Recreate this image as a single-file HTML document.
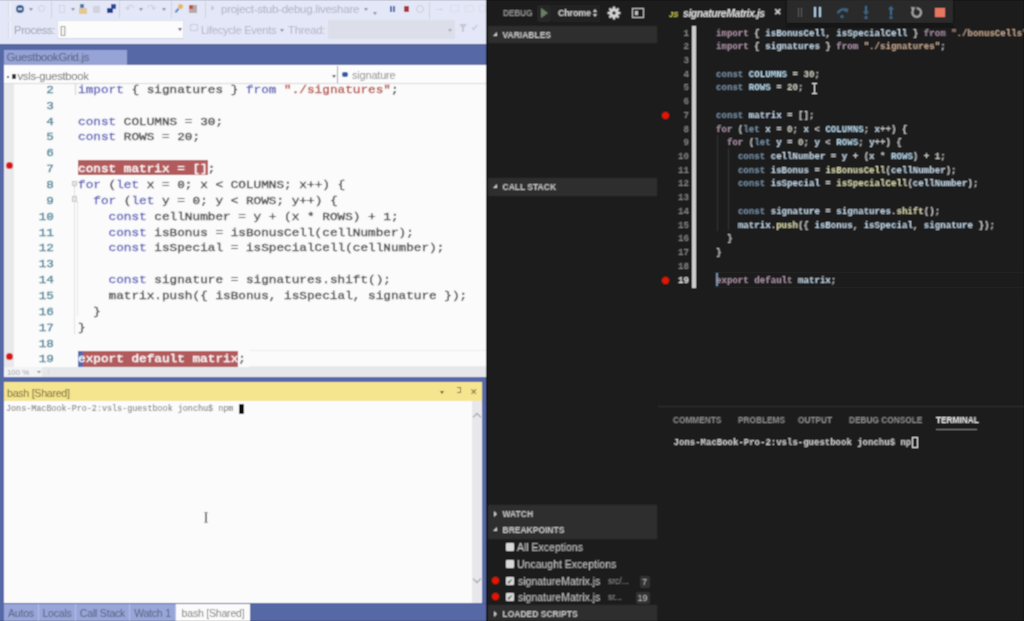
<!DOCTYPE html>
<html><head><meta charset="utf-8">
<style>
*{margin:0;padding:0;box-sizing:border-box}
html,body{width:1024px;height:621px;overflow:hidden;background:#1b1b1b;font-family:"Liberation Sans",sans-serif}
.a{position:absolute}
.tri{width:0;height:0;border-top:3px solid #8a8e9e;border-left:2.5px solid transparent;border-right:2.5px solid transparent}
.tri2{width:0;height:0;border-top:3px solid #505460;border-left:2.5px solid transparent;border-right:2.5px solid transparent}
.sep{width:1px;height:17px;background:#cfd3de}
/* LEFT VS */
#vs{left:0;top:0;width:486px;height:621px;background:#5668a6;overflow:hidden}
#tb{left:0;top:0;width:486px;height:45px;background:#e3e7f7;border-bottom:1.5px solid #4a5a92;color:#a4a8b8;font-size:11px}
#tab1{left:4px;top:49.5px;width:123px;height:15px;background:#96a3d6;color:#56607a;font-size:11.3px;line-height:15px;padding-left:2.5px;letter-spacing:-0.3px}
#nav{z-index:2;left:4px;top:64.5px;width:482px;height:19.5px;background:#fcfcfc;border-bottom:1px solid #d8dade;font-size:10.5px;color:#6a6a6a}
#code1{left:4px;top:83px;width:482px;height:284px;background:#fbfbfb;overflow:hidden}
#glyph{left:0;top:0;width:10px;height:284px;background:#e9e9eb}
.L{position:absolute;left:0;height:15.86px;line-height:15.86px;font-family:"Liberation Mono",monospace;font-size:12.72px;white-space:pre;color:#3c3c3c;-webkit-text-stroke:0.35px;transform:scaleY(0.9);transform-origin:0 50%}
.n{position:absolute;left:0;width:50px;text-align:right;color:#3f7f94}
.c{position:absolute;left:74px}
.kw{color:#5a5cba}
.st{color:#b4463a}
.hl{color:#fff}
.hl2{color:#fff}
.hlb{position:absolute;background:#b35a5c}
.bp{position:absolute;width:7px;height:7px;border-radius:50%;background:#d4161a}
#stat{left:4px;top:367px;width:482px;height:10px;background:#e6e7eb}
#yh{left:4px;top:382px;width:478px;height:19px;background:#f6e58f;color:#6a6030;font-size:10px;line-height:19.2px}
#term1{left:4px;top:401px;width:468px;height:202px;background:#fbfbfb}
#sb1{left:472px;top:401px;width:10px;height:202px;background:#e8e8ec}
#btabs{left:4px;top:603px;width:482px;height:18px;background:#5668a6;border-top:1px solid #4c5c98}
.bt{position:absolute;top:0;height:18px;background:#98a5d8;color:#56607c;font-size:10.5px;line-height:19.5px;text-align:center;border-right:1px solid #b4bde4;letter-spacing:-0.2px}
/* RIGHT */
#side{left:486px;top:0;width:172px;height:621px;background:#1f1f1f;color:#ccc;overflow:hidden}
.sh{position:absolute;left:2px;width:169px;height:17.5px;background:#2e2e2e;font-size:8.5px;font-weight:bold;color:#c4c4c4;line-height:19.2px}
.sh span{position:absolute;left:14.5px;letter-spacing:0px}
.tr{position:absolute;width:0;height:0}
.tr.dn{left:5px;top:6px;border-bottom:4.5px solid #c8c8c8;border-left:4.5px solid transparent}
.tr.rt{left:5.5px;top:6px;border-left:3.5px solid #c8c8c8;border-top:3px solid transparent;border-bottom:3px solid transparent}
.cbx{position:absolute;width:8px;height:8px;background:#d8d8d8;border-radius:1px;font-size:7px;line-height:9px;color:#333;text-align:center}
.bi{position:absolute;font-size:10.5px;color:#c4c4c4;letter-spacing:0px;white-space:pre}
.bi2{position:absolute;font-size:8.5px;color:#8a8a8a;white-space:pre}
.bdg{position:absolute;height:12px;background:#333;color:#bbb;font-size:9px;line-height:12px;text-align:center;border-radius:2px}
.bpd{position:absolute;width:7px;height:7px;border-radius:50%;background:#e51400}
#ed{left:658px;top:0;width:366px;height:621px;background:#1a1a1a;overflow:hidden}
.R{position:absolute;left:0;height:13.72px;line-height:13.72px;font-family:"Liberation Mono",monospace;font-size:9.12px;font-weight:bold;white-space:pre;color:#c6c6c6}
.rn{position:absolute;left:0;width:31px;text-align:right;color:#7e7e7e}
.rn.act{color:#e0e0e0}
.rc{position:absolute;left:58px}
.pt{position:absolute;top:415px;font-size:8.3px;font-weight:bold;color:#8a8a8a;letter-spacing:0px}
.pk{color:#a890a4}
.cb{color:#7890a6}
.vb{color:#c0d4e4}
.vc{color:#b8d8ec}
.sr{color:#c0a48e}
.nm{color:#cacbbe}
.fn{color:#d8d8b0}
</style></head><body>
<svg width="0" height="0" style="position:absolute"><filter id="bf" x="0" y="0" width="100%" height="100%"><feConvolveMatrix order="3" kernelMatrix="1 2 1 2 6 2 1 2 1" divisor="18" edgeMode="duplicate" preserveAlpha="true"/></filter></svg>
<div id="root" class="a" style="left:0;top:0;width:1024px;height:621px;filter:url(#bf)">
<div id="vs" class="a">
  <div id="tb" class="a">
    <!-- row1 -->
    <div class="a" style="left:8px;top:2px;width:3px;height:15px;background:#eef0f8;border-left:1px solid #d4d8e4"></div>
    <div class="a" style="left:16px;top:5px;width:8px;height:8px;border-radius:50%;background:#2f5b8c"></div>
    <div class="a" style="left:18px;top:8px;width:4px;height:2px;background:#c8d4e4"></div>
    <div class="a tri" style="left:29px;top:8px"></div>
    <div class="a" style="left:38px;top:5px;width:7px;height:7px;border-radius:50%;border:1.5px solid #cdd0dc"></div>
    <div class="a sep" style="left:51px;top:1px"></div>
    <div class="a" style="left:59px;top:5px;width:6px;height:8px;border:1px solid #d4d7e2"></div>
    <div class="a tri" style="left:71px;top:8px"></div>
    <div class="a" style="left:79px;top:8px;width:8px;height:6px;background:#e4c894"></div>
    <div class="a" style="left:80px;top:4px;width:4px;height:4px;background:#4a7ab8"></div>
    <div class="a" style="left:93px;top:6px;width:7px;height:7px;background:#d0d3dc"></div>
    <div class="a" style="left:107px;top:8px;width:6px;height:5px;background:#1d3c98"></div>
    <div class="a" style="left:111px;top:4px;width:5px;height:5px;background:#2a4aa0"></div>
    <div class="a sep" style="left:119px;top:1px"></div>
    <div class="a" style="left:125px;top:3px;width:10px;height:10px;color:#c8ccd8;font-size:11px;line-height:10px">&#x21B6;</div>
    <div class="a tri" style="left:139px;top:8px"></div>
    <div class="a" style="left:147px;top:3px;width:10px;height:10px;color:#c8ccd8;font-size:11px;line-height:10px">&#x21B7;</div>
    <div class="a tri" style="left:162px;top:8px"></div>
    <div class="a sep" style="left:171px;top:1px"></div>
    <div class="a" style="left:178px;top:4px;width:5px;height:5px;border-radius:50%;background:#e8b850"></div>
    <div class="a" style="left:176px;top:8px;width:2px;height:5px;background:#4a80c8;transform:rotate(40deg)"></div>
    <div class="a" style="left:189px;top:5px;width:8px;height:8px;background:#b4a8a8"></div>
    <div class="a" style="left:189px;top:5px;width:4px;height:4px;background:#c84848"></div>
    <div class="a sep" style="left:205px;top:1px"></div>
    <div class="a" style="left:211px;top:5px;width:0;height:0;border-left:4px solid #c8ccd8;border-top:3.5px solid transparent;border-bottom:3.5px solid transparent"></div>
    <div class="a" style="left:221px;top:3px;font-size:11.5px;color:#aeb2c0;letter-spacing:-0.25px">project-stub-debug.liveshare</div>
    <div class="a tri" style="left:364px;top:8px"></div>
    <div class="a tri" style="left:373px;top:12px"></div>
    <div class="a" style="left:390px;top:6px;width:2px;height:6px;background:#3064a0"></div>
    <div class="a" style="left:393px;top:6px;width:2px;height:6px;background:#3064a0"></div>
    <div class="a" style="left:404px;top:6px;width:5px;height:6px;background:#b03030"></div>
    <div class="a" style="left:416px;top:5px;width:8px;height:8px;border-radius:50%;border:1.5px solid #c8ccd8"></div>
    <div class="a sep" style="left:429px;top:2px"></div>
    <div class="a" style="left:434px;top:1px;font-size:11px;color:#c4c8d4">&#x2192;</div>
    <div class="a" style="left:450px;top:5px;width:9px;height:7px;border:1px solid #dcdfe8"></div>
    <div class="a" style="left:465px;top:5px;width:9px;height:7px;border:1px solid #dcdfe8"></div>
    <div class="a" style="left:479px;top:5px;width:7px;height:7px;border:1px solid #dcdfe8"></div>
    <!-- row2 -->
    <div class="a" style="left:8px;top:21px;width:3px;height:17px;background:#eef0f8;border-left:1px solid #d4d8e4"></div>
    <div class="a" style="left:14px;top:24px;font-size:11.3px;color:#9a9eac;letter-spacing:-0.35px">Process:</div>
    <div class="a" style="left:57px;top:20px;width:127px;height:19px;background:#fcfcfd;border:1px solid #e0e2ec;border-bottom-color:#d4d6e0"></div>
    <div class="a" style="left:60px;top:24px;font-size:11px;color:#8a8a80">[]</div>
    <div class="a tri2" style="left:178px;top:28px"></div>
    <div class="a" style="left:190px;top:24px;width:8px;height:7px;border:1px solid #c8ccd8"></div>
    <div class="a" style="left:201px;top:24px;font-size:11.2px;color:#b0b4c2;letter-spacing:-0.35px">Lifecycle Events</div>
    <div class="a tri" style="left:280px;top:29px"></div>
    <div class="a" style="left:288px;top:24px;font-size:11.2px;color:#b0b4c2;letter-spacing:-0.2px">Thread:</div>
    <div class="a" style="left:328px;top:20px;width:127px;height:19px;background:#dcdfe9"></div>
    <div class="a tri" style="left:448px;top:28.5px;border-top-color:#a8acb8"></div>
    <div class="a" style="left:459px;top:24px;width:0;height:0;border-top:5px solid #c4c8d4;border-left:4px solid transparent;border-right:4px solid transparent"></div>
    <div class="a" style="left:462px;top:27px;width:2px;height:5px;background:#c4c8d4"></div>
    <div class="a" style="left:471px;top:22px;font-size:10px;color:#c8ccd8">&#x2714;</div>
  </div>
  <div id="tab1" class="a">GuestbookGrid.js</div>
  <div id="nav" class="a">
    <div class="a" style="left:3px;top:11px;width:2px;height:2px;background:#444"></div>
    <div class="a" style="left:8px;top:9px;width:4px;height:5px;background:#333"></div>
    <div class="a" style="left:13.5px;top:5px;font-size:11.3px;letter-spacing:-0.3px">vsls-guestbook</div>
    <div class="a tri2" style="left:328px;top:10px"></div>
    <div class="a" style="left:333px;top:1px;width:1px;height:17px;background:#9aa0b4"></div>
    <div class="a" style="left:338px;top:7px;width:6px;height:5px;border-radius:2px;background:#2a5aa8"></div>
    <div class="a" style="left:348px;top:4.5px;font-size:11px;color:#8a8a8a;letter-spacing:-0.2px">signature</div>
  </div>
  <div id="code1" class="a">
    <div id="glyph" class="a"></div>
    <div class="hlb" style="left:73.9px;top:77px;width:130px;height:15.2px"></div>
    <div class="hlb" style="left:73.9px;top:268px;width:160.3px;height:15.5px"></div>
    <div class="a" style="left:73.9px;top:268px;width:5px;height:15.5px;background:#4f68b4"></div>
    <div class="bp" style="left:1.5px;top:79px"></div>
    <div class="bp" style="left:1.5px;top:270px"></div>
    <div class="a" style="left:245px;top:267px;width:237px;height:1px;background:#ececee"></div>
    <div class="a" style="left:245px;top:283px;width:237px;height:1px;background:#ececee"></div>
    <div class="a" style="left:71px;top:0px;width:1px;height:12px;background:#d0d0d4"></div>
    <div class="a" style="left:67.5px;top:97.5px;width:5.5px;height:5.5px;border:1px solid #c4c4c8;background:#e8e8ea"></div>
    <div class="a" style="left:69.7px;top:103px;width:1px;height:148px;border-left:1px dotted #c4c4c8"></div>
    <div class="a" style="left:72.5px;top:119px;width:1px;height:114px;border-left:1px dotted #d4d4d8"></div>
    <div class="a" style="left:67.5px;top:113px;width:5.5px;height:5.5px;border:1px solid #c4c4c8;background:#e8e8ea"></div>
<div class="L" style="top:-1.20px"><span class="n">2</span><span class="c"><span class="kw">import</span> { signatures } <span class="kw">from</span> <span class="st">"./signatures"</span>;</span></div>
<div class="L" style="top:14.66px"><span class="n">3</span><span class="c"></span></div>
<div class="L" style="top:30.52px"><span class="n">4</span><span class="c"><span class="kw">const</span> COLUMNS = 30;</span></div>
<div class="L" style="top:46.38px"><span class="n">5</span><span class="c"><span class="kw">const</span> ROWS = 20;</span></div>
<div class="L" style="top:62.24px"><span class="n">6</span><span class="c"></span></div>
<div class="L" style="top:78.10px"><span class="n">7</span><span class="c"><span class="hl">const matrix = []</span>;</span></div>
<div class="L" style="top:93.96px"><span class="n">8</span><span class="c"><span class="kw">for</span> (<span class="kw">let</span> x = 0; x &lt; COLUMNS; x++) {</span></div>
<div class="L" style="top:109.82px"><span class="n">9</span><span class="c">  <span class="kw">for</span> (<span class="kw">let</span> y = 0; y &lt; ROWS; y++) {</span></div>
<div class="L" style="top:125.68px"><span class="n">10</span><span class="c">    <span class="kw">const</span> cellNumber = y + (x * ROWS) + 1;</span></div>
<div class="L" style="top:141.54px"><span class="n">11</span><span class="c">    <span class="kw">const</span> isBonus = isBonusCell(cellNumber);</span></div>
<div class="L" style="top:157.40px"><span class="n">12</span><span class="c">    <span class="kw">const</span> isSpecial = isSpecialCell(cellNumber);</span></div>
<div class="L" style="top:173.26px"><span class="n">13</span><span class="c"></span></div>
<div class="L" style="top:189.12px"><span class="n">14</span><span class="c">    <span class="kw">const</span> signature = signatures.shift();</span></div>
<div class="L" style="top:204.98px"><span class="n">15</span><span class="c">    matrix.push({ isBonus, isSpecial, signature });</span></div>
<div class="L" style="top:220.84px"><span class="n">16</span><span class="c">  }</span></div>
<div class="L" style="top:236.70px"><span class="n">17</span><span class="c">}</span></div>
<div class="L" style="top:252.56px"><span class="n">18</span><span class="c"></span></div>
<div class="L" style="top:268.42px"><span class="n">19</span><span class="c"><span class="hl2">export default matrix</span>;</span></div>
  </div>
  <div id="stat" class="a">
    <div class="a" style="left:0;top:0;width:38px;height:10px;background:#f3f3f5"></div>
    <div class="a" style="left:3px;top:0.5px;font-size:7.8px;color:#9a9ea8;line-height:10px">100 %</div>
    <div class="a tri2" style="left:32.5px;top:4px;border-top-width:2px;border-top-color:#777"></div>
    <div class="a" style="left:44px;top:2px;width:1px;height:6px;background:#d8dade"></div>
  </div>
  <div id="yh" class="a">
    <div class="a" style="left:3px;top:1.5px;font-size:10.8px;letter-spacing:-0.35px;color:#706838">bash [Shared]</div>
    <div class="a tri2" style="left:436px;top:8.5px;border-top-color:#5a5020"></div>
    <div class="a" style="left:453px;top:5px;width:4px;height:6px;border:1px solid #7a7040;border-left:none"></div>
    <div class="a" style="left:466px;top:1px;font-size:8.5px;color:#6a6030">&#x2715;</div>
  </div>
  <div id="term1" class="a">
    <div class="a" style="left:2px;top:2.5px;font-family:'Liberation Mono',monospace;font-size:8.5px;color:#6a6a6a;white-space:pre;letter-spacing:-0.05px">Jons-MacBook-Pro-2:vsls-guestbook jonchu$ npm </div>
    <div class="a" style="left:234.5px;top:3px;width:5px;height:10px;background:#111"></div>
    <div class="a" style="left:201px;top:111px;width:1.5px;height:10px;background:#777"></div>
    <div class="a" style="left:199.5px;top:110.5px;width:4.5px;height:1px;background:#999"></div>
    <div class="a" style="left:199.5px;top:120.5px;width:4.5px;height:1px;background:#999"></div>
  </div>
  <div id="sb1" class="a">
    <div class="a" style="left:2px;top:13px;width:6px;height:6px;border-left:1px solid #999;border-top:1px solid #999;transform:rotate(45deg)"></div>
    <div class="a" style="left:2px;top:175px;width:6px;height:6px;border-right:1px solid #999;border-bottom:1px solid #999;transform:rotate(45deg)"></div>
  </div>
  <div id="btabs" class="a">
    <div class="bt" style="left:0;width:35px">Autos</div>
    <div class="bt" style="left:35px;width:37px">Locals</div>
    <div class="bt" style="left:72px;width:54px">Call Stack</div>
    <div class="bt" style="left:126px;width:46px">Watch 1</div>
    <div class="bt" style="left:172px;width:74px;background:#fbfbfb;color:#7a7a7a;border:none">bash [Shared]</div>
  </div>
</div>
<div id="side" class="a">
  <div class="a" style="left:0;top:0;width:2px;height:621px;background:#141414"></div>
  <div class="a" style="left:17px;top:8px;font-size:8.5px;color:#8a8a8a;font-weight:bold;letter-spacing:-0.3px">DEBUG</div>
  <div class="a" style="left:51px;top:5px;width:14px;height:17px;background:#262626;border-radius:2px"></div>
  <div class="a" style="left:66px;top:5px;width:48px;height:17px;background:#242424;border-radius:2px"></div>
  <div class="a" style="left:54.5px;top:8px;width:0;height:0;border-left:7px solid #6a7e66;border-top:5px solid transparent;border-bottom:5px solid transparent"></div>
  <div class="a" style="left:72px;top:8px;font-size:9px;color:#d0d0d0;font-weight:bold;letter-spacing:-0.2px">Chrome</div>
  <div class="a" style="left:107px;top:9px;width:0;height:0;border-bottom:3px solid #ccc;border-left:2.5px solid transparent;border-right:2.5px solid transparent"></div>
  <div class="a" style="left:107px;top:14px;width:0;height:0;border-top:3px solid #ccc;border-left:2.5px solid transparent;border-right:2.5px solid transparent"></div>
  <svg class="a" style="left:121px;top:6px" width="14" height="14" viewBox="0 0 14 14"><g fill="#d4d4d4"><circle cx="7" cy="7" r="4.6"/><rect x="5.8" y="0.6" width="2.4" height="12.8"/><rect x="0.6" y="5.8" width="12.8" height="2.4"/><rect x="5.8" y="0.6" width="2.4" height="12.8" transform="rotate(45 7 7)"/><rect x="5.8" y="0.6" width="2.4" height="12.8" transform="rotate(-45 7 7)"/></g><circle cx="7" cy="7" r="1.8" fill="#1c1c1c"/></svg>
  <div class="a" style="left:146px;top:8px;width:12px;height:10px;border:1.5px solid #bcbcbc"></div>
  <div class="a" style="left:148.5px;top:11px;width:3px;height:4px;background:#bcbcbc"></div>
  <div class="sh" style="top:25.5px"><i class="tr dn"></i><span>VARIABLES</span></div>
  <div class="sh" style="top:178px"><i class="tr dn"></i><span>CALL STACK</span></div>
  <div class="sh" style="top:504.5px"><i class="tr rt"></i><span>WATCH</span></div>
  <div class="sh" style="top:521.4px"><i class="tr dn"></i><span>BREAKPOINTS</span></div>
  <div class="sh" style="top:604.5px"><i class="tr rt"></i><span>LOADED SCRIPTS</span></div>

  <div class="cbx" style="left:19.5px;top:542.5px"></div>
  <div class="bi" style="left:31px;top:541px">All Exceptions</div>
  <div class="cbx" style="left:19.5px;top:559.5px"></div>
  <div class="bi" style="left:31px;top:558px">Uncaught Exceptions</div>
  <div class="bpd" style="left:6px;top:577px"></div>
  <div class="cbx" style="left:19.5px;top:576.5px">&#x2714;</div>
  <div class="bi" style="left:32px;top:575px">signatureMatrix.js</div>
  <div class="bi2" style="left:122px;top:576px">src/...</div>
  <div class="bdg" style="left:153.5px;top:576px;width:10px">7</div>
  <div class="bpd" style="left:6px;top:593px"></div>
  <div class="cbx" style="left:19.5px;top:592.5px">&#x2714;</div>
  <div class="bi" style="left:32px;top:591px">signatureMatrix.js</div>
  <div class="bi2" style="left:122px;top:592px">sr...</div>
  <div class="bdg" style="left:149.5px;top:592px;width:14px">19</div>
</div>
<div id="ed" class="a">
  <div class="a" style="left:0;top:0;width:366px;height:26px;background:#1e1e1e"></div>
  <div class="a" style="left:11px;top:9.5px;font-size:7.5px;font-weight:bold;color:#c8c850;font-style:italic">JS</div>
  <div class="a" style="left:25px;top:7px;font-size:10.5px;font-style:italic;font-weight:bold;color:#dcdcdc;letter-spacing:-0.45px">signatureMatrix.js</div>
  <div class="a" style="left:116px;top:7px;font-size:9px;color:#e0e0e0;font-weight:bold">&#x2715;</div>
  <div class="a" style="left:129px;top:0;width:166px;height:22.5px;background:#2b2b2b;box-shadow:0 1px 3px #000"></div>
  <div class="a" style="left:139.5px;top:7.5px;width:1.5px;height:9px;background:#5a5a5a"></div>
  <div class="a" style="left:142.5px;top:7.5px;width:1.5px;height:9px;background:#5a5a5a"></div>
  <div class="a" style="left:155.5px;top:7px;width:2.5px;height:10px;background:#a8c8e0"></div>
  <div class="a" style="left:160.5px;top:7px;width:2.5px;height:10px;background:#a8c8e0"></div>
  <svg class="a" style="left:178px;top:5px" width="13" height="14" viewBox="0 0 13 14"><path d="M1.5 8 Q6 2 10.5 6" stroke="#3d6888" stroke-width="2.2" fill="none"/><path d="M8 3.5 L12 3.5 L11.5 8 Z" fill="#3d6888"/><circle cx="6" cy="11.5" r="1.6" fill="#3d6888"/></svg>
  <svg class="a" style="left:203px;top:5px" width="10" height="15" viewBox="0 0 10 15"><path d="M5 1 L5 8" stroke="#3d6888" stroke-width="2" fill="none"/><path d="M2 6.5 L8 6.5 L5 10 Z" fill="#3d6888"/><circle cx="5" cy="12.5" r="1.6" fill="#3d6888"/></svg>
  <svg class="a" style="left:228px;top:5px" width="10" height="15" viewBox="0 0 10 15"><path d="M5 4 L5 10" stroke="#3d6888" stroke-width="2" fill="none"/><path d="M2 4.5 L8 4.5 L5 1 Z" fill="#3d6888"/><circle cx="5" cy="12.5" r="1.6" fill="#3d6888"/></svg>
  <svg class="a" style="left:252px;top:5.5px" width="13" height="13" viewBox="0 0 13 13"><path d="M3.2 4 A4.3 4.3 0 1 0 6.5 2.2" stroke="#a8a8a8" stroke-width="2" fill="none"/><path d="M1 1 L5.5 1.5 L2.5 5.5 Z" fill="#a8a8a8"/></svg>
  <div class="a" style="left:277px;top:7.5px;width:9.5px;height:9.5px;background:#e8775e"></div>
  <div class="a" style="left:34.3px;top:25.5px;width:3.8px;height:262px;background:#cccccc"></div>
  <div class="a" style="left:58.5px;top:134.5px;width:1px;height:96px;background:#303030"></div>
  <div class="a" style="left:69.5px;top:148px;width:1px;height:82px;background:#303030"></div>
  <div class="a" style="left:4px;top:112px;width:7px;height:7px;border-radius:50%;background:#e51400"></div>
  <div class="a" style="left:4px;top:277px;width:7px;height:7px;border-radius:50%;background:#e51400"></div>
  <div class="a" style="left:56px;top:272px;width:310px;height:1px;background:#252525"></div>
  <div class="a" style="left:56px;top:287px;width:310px;height:1px;background:#252525"></div>
  <div class="a" style="left:58px;top:273px;width:2px;height:13px;background:#6a8aa8"></div>
  <div class="a" style="left:153.5px;top:83px;width:5px;height:11px;border-top:1px solid #ddd;border-bottom:1px solid #ddd"></div>
  <div class="a" style="left:155.5px;top:83px;width:1px;height:11px;background:#ddd"></div>
  <div class="a" style="left:0;top:406px;width:366px;height:1px;background:#2e2e2e"></div>
  <div class="pt" style="left:15px">COMMENTS</div>
  <div class="pt" style="left:80px">PROBLEMS</div>
  <div class="pt" style="left:140px">OUTPUT</div>
  <div class="pt" style="left:191px">DEBUG CONSOLE</div>
  <div class="pt" style="left:278px;color:#e8e8e8">TERMINAL</div>
  <div class="a" style="left:278px;top:429px;width:41px;height:1px;background:#777"></div>
  <div class="a" style="left:15.6px;top:438px;font-family:'Liberation Mono',monospace;font-weight:bold;font-size:9px;color:#cfcfcf;white-space:pre">Jons-MacBook-Pro-2:vsls-guestbook jonchu$ np</div>
  <div class="a" style="left:254px;top:437px;width:6px;height:11px;border:1px solid #ddd"></div>
<div class="R" style="top:26.54px"><span class="rn">1</span><span class="rc"><span class="pk">import</span> { <span class="vb">isBonusCell</span>, <span class="vb">isSpecialCell</span> } <span class="pk">from</span> <span class="sr">"./bonusCells";</span></span></div>
<div class="R" style="top:40.26px"><span class="rn">2</span><span class="rc"><span class="pk">import</span> { <span class="vb">signatures</span> } <span class="pk">from</span> <span class="sr">"./signatures"</span>;</span></div>
<div class="R" style="top:53.98px"><span class="rn">3</span><span class="rc"></span></div>
<div class="R" style="top:67.70px"><span class="rn">4</span><span class="rc"><span class="cb">const</span> <span class="vc">COLUMNS</span> = <span class="nm">30</span>;</span></div>
<div class="R" style="top:81.42px"><span class="rn">5</span><span class="rc"><span class="cb">const</span> <span class="vc">ROWS</span> = <span class="nm">20</span>;</span></div>
<div class="R" style="top:95.14px"><span class="rn">6</span><span class="rc"></span></div>
<div class="R" style="top:108.86px"><span class="rn">7</span><span class="rc"><span class="cb">const</span> <span class="vb">matrix</span> = [];</span></div>
<div class="R" style="top:122.58px"><span class="rn">8</span><span class="rc"><span class="pk">for</span> (<span class="cb">let</span> <span class="vb">x</span> = <span class="nm">0</span>; <span class="vb">x</span> &lt; <span class="vc">COLUMNS</span>; <span class="vb">x</span>++) {</span></div>
<div class="R" style="top:136.30px"><span class="rn">9</span><span class="rc">  <span class="pk">for</span> (<span class="cb">let</span> <span class="vb">y</span> = <span class="nm">0</span>; <span class="vb">y</span> &lt; <span class="vc">ROWS</span>; <span class="vb">y</span>++) {</span></div>
<div class="R" style="top:150.02px"><span class="rn">10</span><span class="rc">    <span class="cb">const</span> <span class="vb">cellNumber</span> = <span class="vb">y</span> + (<span class="vb">x</span> * <span class="vc">ROWS</span>) + <span class="nm">1</span>;</span></div>
<div class="R" style="top:163.74px"><span class="rn">11</span><span class="rc">    <span class="cb">const</span> <span class="vb">isBonus</span> = <span class="fn">isBonusCell</span>(<span class="vb">cellNumber</span>);</span></div>
<div class="R" style="top:177.46px"><span class="rn">12</span><span class="rc">    <span class="cb">const</span> <span class="vb">isSpecial</span> = <span class="fn">isSpecialCell</span>(<span class="vb">cellNumber</span>);</span></div>
<div class="R" style="top:191.18px"><span class="rn">13</span><span class="rc"></span></div>
<div class="R" style="top:204.90px"><span class="rn">14</span><span class="rc">    <span class="cb">const</span> <span class="vb">signature</span> = <span class="vb">signatures</span>.<span class="fn">shift</span>();</span></div>
<div class="R" style="top:218.62px"><span class="rn">15</span><span class="rc">    <span class="vb">matrix</span>.<span class="fn">push</span>({ <span class="vb">isBonus</span>, <span class="vb">isSpecial</span>, <span class="vb">signature</span> });</span></div>
<div class="R" style="top:232.34px"><span class="rn">16</span><span class="rc">  }</span></div>
<div class="R" style="top:246.06px"><span class="rn">17</span><span class="rc">}</span></div>
<div class="R" style="top:259.78px"><span class="rn">18</span><span class="rc"></span></div>
<div class="R" style="top:273.50px"><span class="rn act">19</span><span class="rc"><span class="pk">export</span> <span class="pk">default</span> <span class="vb">matrix</span>;</span></div>
</div>
</div>
</body></html>
